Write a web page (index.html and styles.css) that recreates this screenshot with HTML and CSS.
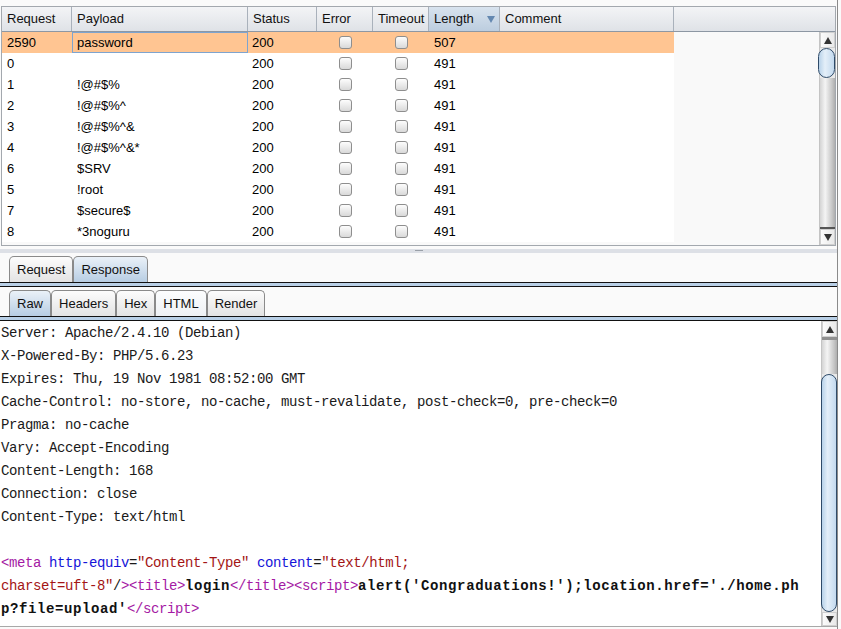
FILE: index.html
```html
<!DOCTYPE html>
<html>
<head>
<meta charset="utf-8">
<link rel="stylesheet" href="styles.css">
</head>
<body>
<div class="app">
  <div class="results">
    <div class="thead">
      <div class="th c1">Request</div>
      <div class="th c2">Payload</div>
      <div class="th c3">Status</div>
      <div class="th c4">Error</div>
      <div class="th c5">Timeout</div>
      <div class="th c6 sorted">Length<span class="sort"><svg width="8" height="7" viewBox="0 0 8 7"><path d="M0 0H8L4 7Z" fill="#6488b0"/></svg></span></div>
      <div class="th c7">Comment</div>
      <div class="th-fill"></div>
    </div>
    <div class="tbody-wrap">
      <div class="tbody">
        <div class="row sel"><div class="td c1">2590</div><div class="td c2 focus">password</div><div class="td c3">200</div><div class="td c4"><span class="cb"></span></div><div class="td c5"><span class="cb"></span></div><div class="td c6">507</div><div class="td c7"></div></div>
        <div class="row"><div class="td c1">0</div><div class="td c2"></div><div class="td c3">200</div><div class="td c4"><span class="cb"></span></div><div class="td c5"><span class="cb"></span></div><div class="td c6">491</div><div class="td c7"></div></div>
        <div class="row"><div class="td c1">1</div><div class="td c2">!@#$%</div><div class="td c3">200</div><div class="td c4"><span class="cb"></span></div><div class="td c5"><span class="cb"></span></div><div class="td c6">491</div><div class="td c7"></div></div>
        <div class="row"><div class="td c1">2</div><div class="td c2">!@#$%^</div><div class="td c3">200</div><div class="td c4"><span class="cb"></span></div><div class="td c5"><span class="cb"></span></div><div class="td c6">491</div><div class="td c7"></div></div>
        <div class="row"><div class="td c1">3</div><div class="td c2">!@#$%^&amp;</div><div class="td c3">200</div><div class="td c4"><span class="cb"></span></div><div class="td c5"><span class="cb"></span></div><div class="td c6">491</div><div class="td c7"></div></div>
        <div class="row"><div class="td c1">4</div><div class="td c2">!@#$%^&amp;*</div><div class="td c3">200</div><div class="td c4"><span class="cb"></span></div><div class="td c5"><span class="cb"></span></div><div class="td c6">491</div><div class="td c7"></div></div>
        <div class="row"><div class="td c1">6</div><div class="td c2">$SRV</div><div class="td c3">200</div><div class="td c4"><span class="cb"></span></div><div class="td c5"><span class="cb"></span></div><div class="td c6">491</div><div class="td c7"></div></div>
        <div class="row"><div class="td c1">5</div><div class="td c2">!root</div><div class="td c3">200</div><div class="td c4"><span class="cb"></span></div><div class="td c5"><span class="cb"></span></div><div class="td c6">491</div><div class="td c7"></div></div>
        <div class="row"><div class="td c1">7</div><div class="td c2">$secure$</div><div class="td c3">200</div><div class="td c4"><span class="cb"></span></div><div class="td c5"><span class="cb"></span></div><div class="td c6">491</div><div class="td c7"></div></div>
        <div class="row"><div class="td c1">8</div><div class="td c2">*3noguru</div><div class="td c3">200</div><div class="td c4"><span class="cb"></span></div><div class="td c5"><span class="cb"></span></div><div class="td c6">491</div><div class="td c7"></div></div>
      </div>
      <div class="vscroll">
        <div class="arrow"><svg width="8" height="7" viewBox="0 0 8 7"><path d="M4 0L8 7H0Z" fill="#333"/></svg></div>
        <div class="thumb small"></div>
        <div class="track grow"></div>
        <div class="arrow"><svg width="8" height="7" viewBox="0 0 8 7"><path d="M0 0H8L4 7Z" fill="#333"/></svg></div>
      </div>
    </div>
  </div>
  <div class="splitter"><span class="grip"></span></div>
  <div class="tabbar">
    <div class="tab">Request</div>
    <div class="tab active">Response</div>
  </div>
  <div class="band"></div>
  <div class="tabbar">
    <div class="tab active">Raw</div>
    <div class="tab">Headers</div>
    <div class="tab">Hex</div>
    <div class="tab hover">HTML</div>
    <div class="tab">Render</div>
  </div>
  <div class="band"></div>
  <div class="editor">
    <div class="code">
<div class="ln">Server: Apache/2.4.10 (Debian)</div>
<div class="ln">X-Powered-By: PHP/5.6.23</div>
<div class="ln">Expires: Thu, 19 Nov 1981 08:52:00 GMT</div>
<div class="ln">Cache-Control: no-store, no-cache, must-revalidate, post-check=0, pre-check=0</div>
<div class="ln">Pragma: no-cache</div>
<div class="ln">Vary: Accept-Encoding</div>
<div class="ln">Content-Length: 168</div>
<div class="ln">Connection: close</div>
<div class="ln">Content-Type: text/html</div>
<div class="ln"> </div>
<div class="ln"><span class="tg">&lt;meta</span> <span class="at">http-equiv</span>=<span class="vl">"Content-Type"</span> <span class="at">content</span>=<span class="vl">"text/html;</span></div>
<div class="ln"><span class="vl">charset=uft-8"</span>/<span class="tg">&gt;&lt;title&gt;</span><span class="b">login</span><span class="tg">&lt;/title&gt;&lt;script&gt;</span><span class="b">alert('Congraduations!');location.href='./home.ph</span></div>
<div class="ln"><span class="b">p?file=upload'</span><span class="tg">&lt;/script&gt;</span></div>
    </div>
    <div class="vscroll big">
      <div class="arrow"><svg width="8" height="7" viewBox="0 0 8 7"><path d="M4 0L8 7H0Z" fill="#333"/></svg></div>
      <div class="track upper"></div>
      <div class="thumb grow"></div>
      <div class="arrow short"><svg width="8" height="7" viewBox="0 0 8 7"><path d="M0 0H8L4 7Z" fill="#333"/></svg></div>
    </div>
  </div>
</div>
</body>
</html>
```
FILE: styles.css
```css
html, body {
  margin: 0;
  padding: 0;
}
body {
  width: 841px;
  height: 629px;
  overflow: hidden;
  background: #fafafa;
  font-family: "Liberation Sans", Arial, sans-serif;
  font-size: 13px;
  color: #000;
}
.app {
  width: 837px;
  height: 629px;
  border-right: 1px solid #8a8a8a;
  display: flex;
  flex-direction: column;
}
.results {
  margin: 6px 0 0 1px;
  width: 835px;
  height: 240px;
  box-sizing: border-box;
  border: 1px solid #a3a8ae;
  display: flex;
  flex-direction: column;
  background: #f9f9f9;
}
.thead {
  height: 25px;
  box-sizing: border-box;
  border-bottom: 1px solid #8d97a3;
  display: flex;
  background: linear-gradient(#f3f4f6, #dfe2e7);
}
.th {
  box-sizing: border-box;
  border-right: 1px solid #a9b1bb;
  padding-left: 5px;
  line-height: 24px;
  color: #111;
  display: flex;
  align-items: center;
}
.th.sorted {
  background: linear-gradient(#d8e3ee, #bccddf);
  justify-content: space-between;
  padding-right: 4px;
}
.sort {
  display: flex;
  align-items: center;
}
.th-fill {
  flex: 1;
}
.c1 { width: 70px; }
.c2 { width: 176px; }
.c3 { width: 69px; }
.c4 { width: 56px; }
.c5 { width: 56px; }
.c6 { width: 71px; }
.c7 { width: 174px; }
.tbody-wrap {
  flex: 1;
  display: flex;
}
.tbody {
  flex: 1;
  background: #f9f9f9;
}
.row {
  display: flex;
  height: 21px;
  width: 672px;
  background: #fff;
}
.row.sel {
  background: #ffc592;
}
.td {
  box-sizing: border-box;
  padding-left: 5px;
  line-height: 21px;
  white-space: pre;
}
.td.c3, .td.c7 { padding-left: 4px; }
.td.c4, .td.c5 {
  padding-left: 0;
  display: flex;
  align-items: center;
  justify-content: center;
}
.td.focus {
  border: 1px solid #7ea4cf;
  padding-left: 4px;
  line-height: 19px;
}
.cb {
  width: 13px;
  height: 13px;
  box-sizing: border-box;
  border: 1px solid #8e8e8e;
  border-radius: 3px;
  background: linear-gradient(#fdfdfd, #d9d9d9);
}
.vscroll {
  width: 16px;
  display: flex;
  flex-direction: column;
  background: #e9e9e9;
  border-left: 1px solid #c4c4c4;
  box-sizing: border-box;
}
.arrow {
  height: 16px;
  flex: none;
  display: flex;
  align-items: center;
  justify-content: center;
  background: linear-gradient(90deg, #fbfbfb, #e9e9e9);
  border: 1px solid #cfcfcf;
  box-sizing: border-box;
}
.arrow.short { height: 14px; }
.thumb {
  box-sizing: border-box;
  border: 1px solid #2f4b69;
  border-radius: 9px;
  background: linear-gradient(90deg, #b8d2e9, #e4eff9 40%, #c3d9ee);
  margin-left: -2px;
}
.thumb.small { height: 30px; flex: none; }
.grow { flex: 1; }
.track {
  background: linear-gradient(90deg, #d4d4d4, #f4f4f4 35%, #c6c6c6 80%, #aeaeae);
  border-bottom: 2px solid #555;
}
.track.upper {
  height: 37px;
  flex: none;
  border-bottom: none;
  border-top: 3px solid #8f8f8f;
  box-sizing: border-box;
}
.vscroll.big .thumb {
  margin-left: -1px;
  border-radius: 10px 10px 10px 10px;
}
.splitter {
  height: 7px;
  box-sizing: border-box;
  border-bottom: 4px solid #dde0e6;
  display: flex;
  justify-content: center;
  align-items: flex-end;
}
.grip {
  width: 8px;
  height: 1px;
  margin-bottom: -2px;
  background: #9aa0a8;
}
.tabbar {
  height: 29px;
  box-sizing: border-box;
  padding: 3px 0 0 9px;
  display: flex;
  align-items: stretch;
}
.tab {
  box-sizing: border-box;
  padding: 0 7px;
  border: 1px solid #8a8a8a;
  border-bottom: none;
  border-radius: 5px 5px 0 0;
  background: linear-gradient(#fcfcfc, #e3e3e3);
  line-height: 25px;
  color: #111;
}
.tab.active {
  background: linear-gradient(#eaf1f8, #b7cde3);
}
.tab.hover {
  background: linear-gradient(#fcfdfe, #eef1f4);
}
.band {
  height: 5px;
  box-sizing: border-box;
  border-top: 1px solid #111;
  border-bottom: 1px solid #111;
  background: #b8cfe6;
}
.editor {
  height: 306px;
  box-sizing: border-box;
  border-bottom: 1px solid #a8a8a8;
  display: flex;
  background: #fff;
}
.code {
  flex: 1;
  padding: 1px 0 0 1px;
  font-family: "Liberation Mono", "DejaVu Sans Mono", monospace;
  font-size: 14px;
  letter-spacing: -0.4px;
  line-height: 23px;
  color: #1a1a1a;
}
.ln {
  white-space: pre;
  height: 23px;
}
.tg { color: #a41aa4; }
.at { color: #1414d8; }
.vl { color: #a31515; }
.b {
  font-weight: 700;
  letter-spacing: 0.6px;
  color: #111;
}
```
